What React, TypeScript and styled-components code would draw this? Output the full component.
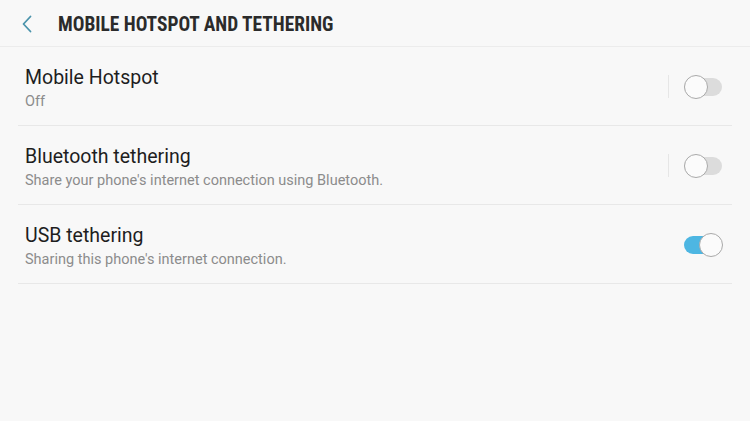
import React from 'react';
import styled, { createGlobalStyle } from 'styled-components';

const GlobalStyle = createGlobalStyle`
    html, body {
        margin: 0;
        padding: 0;
        background: #f8f8f8;
    }
    body {
        font-family: Roboto, "Noto Sans", sans-serif;
    }
`;

const Screen = styled.div`
    width: 750px;
    height: 421px;
    background: #f8f8f8;
    overflow: hidden;
`;

const Header = styled.header`
    height: 47px;
    display: flex;
    align-items: center;
    padding-top: 2px;
    border-bottom: 1px solid #ececec;
    box-sizing: border-box;
`;

const BackBtn = styled.button`
    width: 57px;
    height: 44px;
    padding: 0 0 0 21px;
    border: none;
    background: transparent;
    display: flex;
    align-items: center;
    cursor: pointer;
`;

const Title = styled.h1`
    margin: 0;
    padding-left: 1px;
    font-family: "Liberation Sans Narrow", "Roboto Condensed", Roboto, sans-serif;
    font-weight: bold;
    font-size: 19.4px;
    color: #2b2b2b;
`;

const List = styled.ul`
    list-style: none;
    margin: 0;
    padding: 0 18px 0 18px;
`;

const Row = styled.li`
    height: 79px;
    display: flex;
    align-items: center;
    border-bottom: 1px solid #e8e8e8;
    box-sizing: border-box;
    padding: 1px 10px 0 7px;
`;

const Texts = styled.div`
    flex: 1;
    display: flex;
    flex-direction: column;
    gap: 3px;
    margin-top: 4px;
`;

const Label = styled.div`
    font-size: 19.5px;
    color: #1e1e1e;
    line-height: 24px;
`;

const Sub = styled.div`
    font-size: 14.5px;
    color: #8c8c8c;
    line-height: 18px;
`;

const Divider = styled.span`
    width: 1px;
    height: 23px;
    background: #e6e6e6;
    margin-right: 15px;
`;

const Track = styled.span<{ $on: boolean }>`
    position: relative;
    width: 38px;
    height: 18px;
    border-radius: 9px;
    background: ${({ $on }) => ($on ? '#4db6e2' : '#dcdcdc')};
`;

const Knob = styled.span<{ $on: boolean }>`
    position: absolute;
    top: -3px;
    left: ${({ $on }) => ($on ? '15px' : '0')};
    width: 22px;
    height: 22px;
    border-radius: 50%;
    background: #fbfbfb;
    border: 1px solid #a9a9a9;
`;

const Toggle = ({ on }: { on: boolean }) => (
    <Track $on={on}><Knob $on={on} /></Track>
);

const items = [
    { title: 'Mobile Hotspot', sub: 'Off', on: false, divider: true },
    { title: 'Bluetooth tethering', sub: "Share your phone's internet connection using Bluetooth.", on: false, divider: true },
    { title: 'USB tethering', sub: "Sharing this phone's internet connection.", on: true, divider: false },
];

const App = () => (
    <Screen>
        <GlobalStyle />
        <Header>
            <BackBtn aria-label="Back">
                <svg width="12" height="18" viewBox="0 0 12 18">
                    <path d="M9.5 1.5 L2.5 9 L9.5 16.5" fill="none" stroke="#4a93ab" strokeWidth="1.8" strokeLinecap="round" strokeLinejoin="round" />
                </svg>
            </BackBtn>
            <Title>MOBILE HOTSPOT AND TETHERING</Title>
        </Header>
        <List>
            {items.map(it => (
                <Row key={it.title}>
                    <Texts>
                        <Label>{it.title}</Label>
                        <Sub>{it.sub}</Sub>
                    </Texts>
                    {it.divider && <Divider />}
                    <Toggle on={it.on} />
                </Row>
            ))}
        </List>
    </Screen>
);

export default App;
